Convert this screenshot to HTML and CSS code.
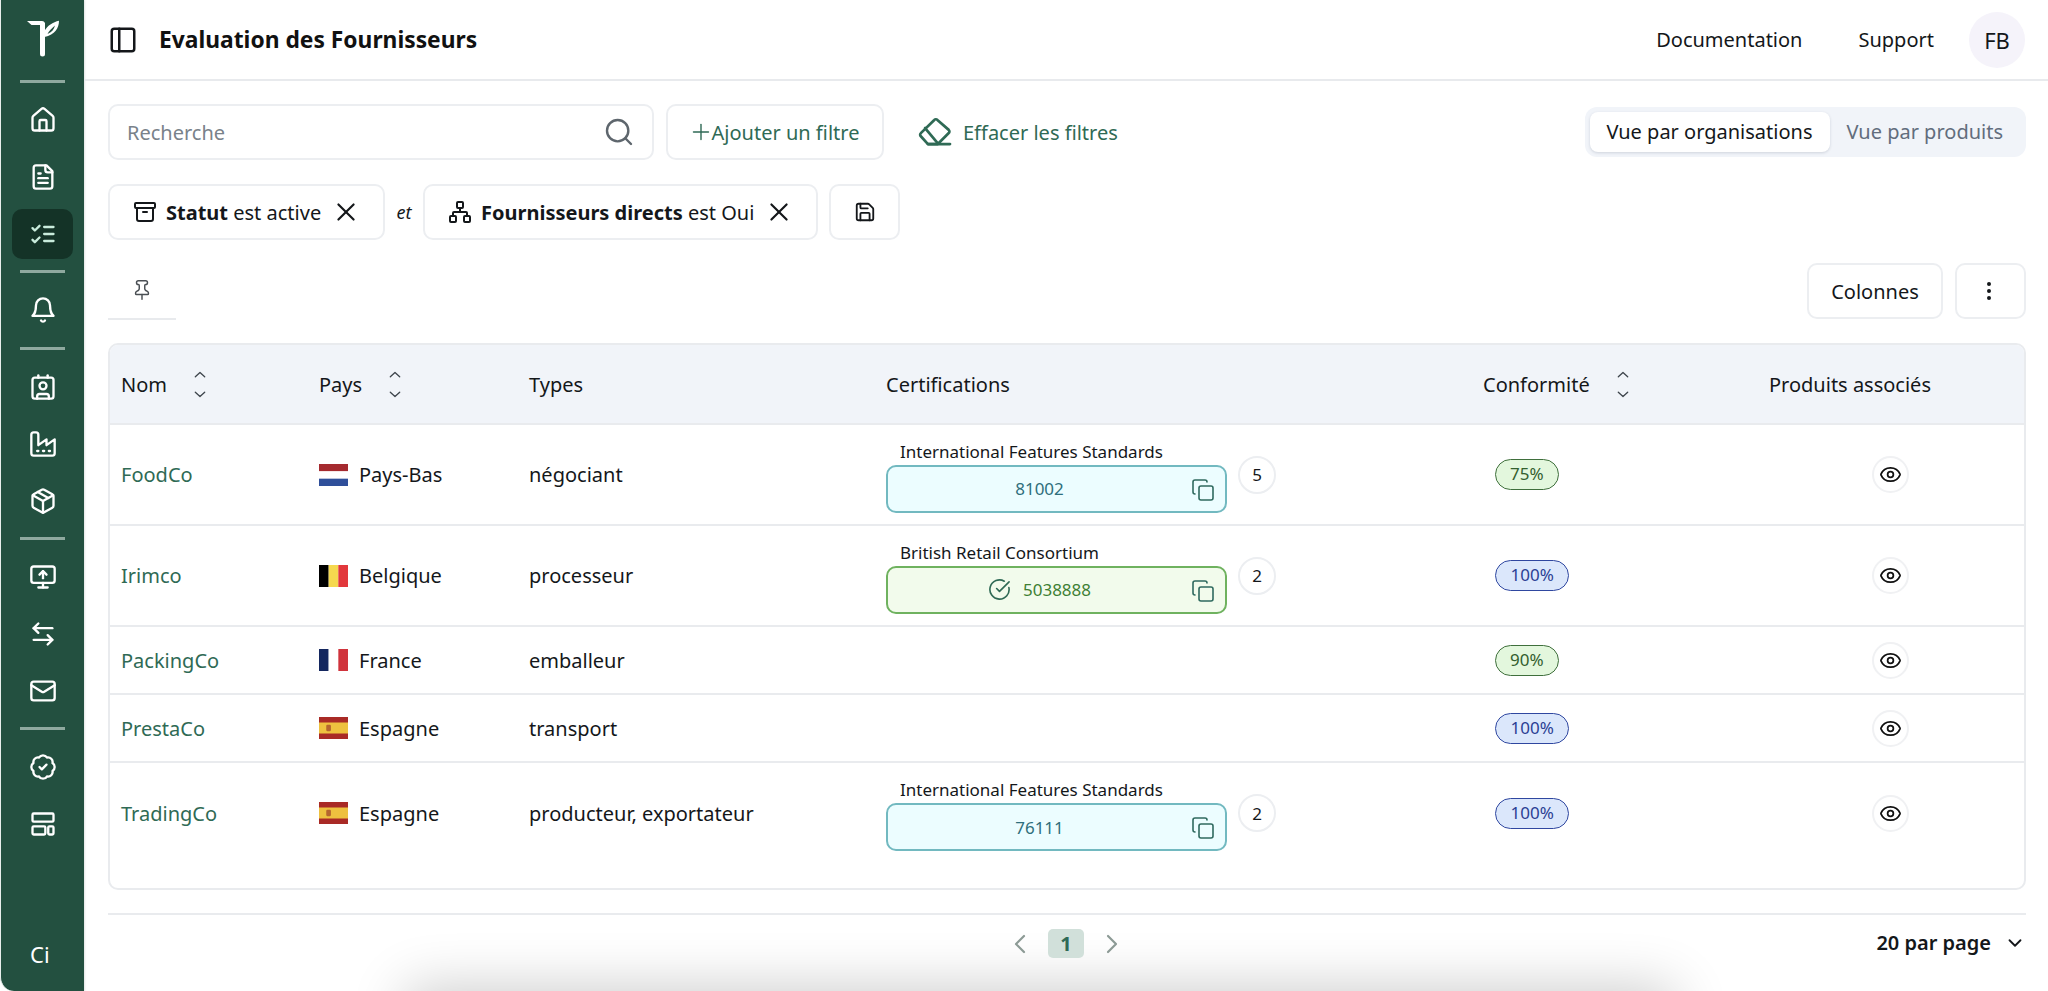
FILE: index.html
```html
<!DOCTYPE html>
<html lang="fr">
<head>
<meta charset="utf-8">
<title>Evaluation des Fournisseurs</title>
<link rel="stylesheet" href="styles.css">
</head>
<body>
<svg class="sprite" aria-hidden="true">
  <symbol id="i-home" viewBox="0 0 24 24"><path d="M3 10a2 2 0 0 1 .709-1.528l7-5.999a2 2 0 0 1 2.582 0l7 5.999A2 2 0 0 1 21 10v9a2 2 0 0 1-2 2H5a2 2 0 0 1-2-2z"/><path d="M15 21v-8a1 1 0 0 0-1-1h-4a1 1 0 0 0-1 1v8"/></symbol>
  <symbol id="i-file" viewBox="0 0 24 24"><path d="M15 2H6a2 2 0 0 0-2 2v16a2 2 0 0 0 2 2h12a2 2 0 0 0 2-2V7Z"/><path d="M14 2v4a2 2 0 0 0 2 2h4"/><path d="M10 9H8"/><path d="M16 13H8"/><path d="M16 17H8"/></symbol>
  <symbol id="i-checks" viewBox="0 0 24 24"><path d="m3 17 2 2 4-4"/><path d="m3 7 2 2 4-4"/><path d="M13 6h8"/><path d="M13 12h8"/><path d="M13 18h8"/></symbol>
  <symbol id="i-bell" viewBox="0 0 24 24"><path d="M6 8a6 6 0 0 1 12 0c0 7 3 9 3 9H3s3-2 3-9"/><path d="M10.3 21a1.94 1.94 0 0 0 3.4 0"/></symbol>
  <symbol id="i-contact" viewBox="0 0 24 24"><path d="M16 2v2"/><path d="M7 22v-2a2 2 0 0 1 2-2h6a2 2 0 0 1 2 2v2"/><path d="M8 2v2"/><circle cx="12" cy="11" r="3"/><rect x="3" y="4" width="18" height="18" rx="2"/></symbol>
  <symbol id="i-factory" viewBox="0 0 24 24"><path d="M2 20a2 2 0 0 0 2 2h16a2 2 0 0 0 2-2V8l-7 5V8l-7 5V4a2 2 0 0 0-2-2H4a2 2 0 0 0-2 2Z"/><path d="M17 18h1"/><path d="M12 18h1"/><path d="M7 18h1"/></symbol>
  <symbol id="i-package" viewBox="0 0 24 24"><path d="M11 21.73a2 2 0 0 0 2 0l7-4A2 2 0 0 0 21 16V8a2 2 0 0 0-1-1.73l-7-4a2 2 0 0 0-2 0l-7 4A2 2 0 0 0 3 8v8a2 2 0 0 0 1 1.73z"/><path d="M12 22V12"/><path d="m3.3 7 8.7 5 8.7-5"/><path d="m7.5 4.27 9 5.15"/></symbol>
  <symbol id="i-monitor" viewBox="0 0 24 24"><path d="m9 10 3-3 3 3"/><path d="M12 13V7"/><rect x="2" y="3" width="20" height="14" rx="2"/><path d="M12 17v4"/><path d="M8 21h8"/></symbol>
  <symbol id="i-arrows" viewBox="0 0 24 24"><path d="M8 3 4 7l4 4"/><path d="M4 7h16"/><path d="m16 21 4-4-4-4"/><path d="M20 17H4"/></symbol>
  <symbol id="i-mail" viewBox="0 0 24 24"><rect x="2" y="4" width="20" height="16" rx="2"/><path d="m22 7-8.97 5.7a1.94 1.94 0 0 1-2.06 0L2 7"/></symbol>
  <symbol id="i-badge" viewBox="0 0 24 24"><path d="M3.85 8.62a4 4 0 0 1 4.78-4.77 4 4 0 0 1 6.74 0 4 4 0 0 1 4.78 4.78 4 4 0 0 1 0 6.74 4 4 0 0 1-4.77 4.78 4 4 0 0 1-6.75 0 4 4 0 0 1-4.78-4.77 4 4 0 0 1 0-6.76Z"/><path d="m9 12 2 2 4-4"/></symbol>
  <symbol id="i-layout" viewBox="0 0 24 24"><rect x="3" y="3" width="18" height="7" rx="1"/><rect x="3" y="14" width="11" height="7" rx="1"/><rect x="16.500" y="14" width="4.500" height="7" rx="1"/></symbol>
  <symbol id="i-panel" viewBox="0 0 24 24"><rect x="3" y="3" width="18" height="18" rx="2"/><path d="M9 3v18"/></symbol>
  <symbol id="i-search" viewBox="0 0 24 24"><circle cx="11" cy="11" r="8"/><path d="m21 21-4.3-4.3"/></symbol>
  <symbol id="i-plus" viewBox="0 0 24 24"><path d="M3 12h18"/><path d="M12 3v18"/></symbol>
  <symbol id="i-eraser" viewBox="0 0 24 24"><path d="M11.500 3.500a1.500 1.500 0 0 1 2.200 0l8 7a1.500 1.500 0 0 1 0 2.200L14 20.500H7L2 15a1.500 1.500 0 0 1 0-2.200Z"/><path d="M5 9.200 14 20"/><path d="M7 20.500h15.600"/></symbol>
  <symbol id="i-archive" viewBox="0 0 24 24"><rect x="2" y="3" width="20" height="5" rx="1"/><path d="M4 8v11a2 2 0 0 0 2 2h12a2 2 0 0 0 2-2V8"/><path d="M10 12h4"/></symbol>
  <symbol id="i-network" viewBox="0 0 24 24"><rect x="16" y="16" width="6" height="6" rx="1"/><rect x="2" y="16" width="6" height="6" rx="1"/><rect x="9" y="2" width="6" height="6" rx="1"/><path d="M5 16v-3a1 1 0 0 1 1-1h12a1 1 0 0 1 1 1v3"/><path d="M12 12V8"/></symbol>
  <symbol id="i-x" viewBox="0 0 24 24"><path d="M19 5 5 19"/><path d="m5 5 14 14"/></symbol>
  <symbol id="i-save" viewBox="0 0 24 24"><path d="M15.2 3a2 2 0 0 1 1.4.6l3.8 3.8a2 2 0 0 1 .6 1.4V19a2 2 0 0 1-2 2H5a2 2 0 0 1-2-2V5a2 2 0 0 1 2-2z"/><path d="M17 21v-7a1 1 0 0 0-1-1H8a1 1 0 0 0-1 1v7"/><path d="M7 3v4a1 1 0 0 0 1 1h7"/></symbol>
  <symbol id="i-pin" viewBox="0 0 24 24"><path d="M12 17v5"/><path d="M9 10.76a2 2 0 0 1-1.11 1.79l-1.78.9A2 2 0 0 0 5 15.24V16a1 1 0 0 0 1 1h12a1 1 0 0 0 1-1v-.76a2 2 0 0 0-1.11-1.79l-1.78-.9A2 2 0 0 1 15 10.76V7a1 1 0 0 1 1-1 2 2 0 0 0 0-4H8a2 2 0 0 0 0 4 1 1 0 0 1 1 1z"/></symbol>
  <symbol id="i-copy" viewBox="0 0 24 24"><rect x="8" y="8" width="14" height="14" rx="2"/><path d="M4 16c-1.1 0-2-.9-2-2V4c0-1.1.9-2 2-2h10c1.1 0 2 .9 2 2"/></symbol>
  <symbol id="i-check" viewBox="0 0 24 24"><path d="M21.801 10A10 10 0 1 1 17 3.335"/><path d="m9 11 3 3L22 4"/></symbol>
  <symbol id="i-eye" viewBox="0 0 24 24"><path d="M2.062 12.348a1 1 0 0 1 0-.696 10.75 10.75 0 0 1 19.876 0 1 1 0 0 1 0 .696 10.75 10.75 0 0 1-19.876 0"/><circle cx="12" cy="12" r="3"/></symbol>
  <symbol id="i-sort" viewBox="0 0 12 26"><path d="m1.500 5.500 4.500-4 4.500 4"/><path d="m1.500 20.500 4.500 4 4.500-4"/></symbol>
  <symbol id="i-left" viewBox="0 0 24 24"><path d="m15 4-8 8 8 8"/></symbol>
  <symbol id="i-right" viewBox="0 0 24 24"><path d="m9 4 8 8-8 8"/></symbol>
  <symbol id="i-down" viewBox="0 0 24 24"><path d="m6 9 6 6 6-6"/></symbol>
  <symbol id="i-dots" viewBox="0 0 24 24"><circle cx="12" cy="5" r="1"/><circle cx="12" cy="12" r="1"/><circle cx="12" cy="19" r="1"/></symbol>
</svg>

<div class="app">
  <aside class="sidebar">
    <div class="logo">
      <svg class="logo-mark" viewBox="0 0 32 37"><path d="M0 1H15a3.500 3.500 0 0 1 3 2V5H4.500Z"/><path d="M13 3.500h5V34a2.500 2.500 0 0 1-5 0Z"/><path fill-rule="evenodd" d="M17.500 11C20 6 26 2 32 .8 32 8 28 15 17.500 17ZM20.500 14C24.500 12.500 27 9.500 28 5.500 24.500 8.500 22 11 20.500 14Z"/></svg>
    </div>
    <div class="rule"></div>
    <nav class="nav-group">
      <a class="nav-item"><svg class="nav-icon"><use href="#i-home"/></svg></a>
      <a class="nav-item"><svg class="nav-icon"><use href="#i-file"/></svg></a>
      <a class="nav-item nav-item-active"><svg class="nav-icon"><use href="#i-checks"/></svg></a>
    </nav>
    <div class="rule"></div>
    <nav class="nav-group nav-group-bell">
      <a class="nav-item"><svg class="nav-icon"><use href="#i-bell"/></svg></a>
    </nav>
    <div class="rule"></div>
    <nav class="nav-group">
      <a class="nav-item"><svg class="nav-icon"><use href="#i-contact"/></svg></a>
      <a class="nav-item"><svg class="nav-icon"><use href="#i-factory"/></svg></a>
      <a class="nav-item"><svg class="nav-icon"><use href="#i-package"/></svg></a>
    </nav>
    <div class="rule"></div>
    <nav class="nav-group">
      <a class="nav-item"><svg class="nav-icon"><use href="#i-monitor"/></svg></a>
      <a class="nav-item"><svg class="nav-icon"><use href="#i-arrows"/></svg></a>
      <a class="nav-item"><svg class="nav-icon"><use href="#i-mail"/></svg></a>
    </nav>
    <div class="rule"></div>
    <nav class="nav-group">
      <a class="nav-item"><svg class="nav-icon"><use href="#i-badge"/></svg></a>
      <a class="nav-item"><svg class="nav-icon"><use href="#i-layout"/></svg></a>
    </nav>
    <div class="tenant">Ci</div>
  </aside>

  <div class="main">
    <header class="topbar">
      <svg class="icon topbar-panel"><use href="#i-panel"/></svg>
      <h1 class="title">Evaluation des Fournisseurs</h1>
      <a class="top-link top-link-doc">Documentation</a>
      <a class="top-link top-link-support">Support</a>
      <div class="avatar">FB</div>
    </header>

    <div class="content">
      <div class="filter-row">
        <label class="search">
          <input class="search-input" type="text" placeholder="Recherche">
          <svg class="icon search-icon"><use href="#i-search"/></svg>
        </label>
        <button class="box-btn add-filter"><svg class="icon plus-icon"><use href="#i-plus"/></svg>Ajouter un filtre</button>
        <a class="clear-filters"><svg class="icon eraser-icon"><use href="#i-eraser"/></svg>Effacer les filtres</a>
        <div class="toggle">
          <span class="toggle-opt toggle-opt-on">Vue par organisations</span>
          <span class="toggle-opt">Vue par produits</span>
        </div>
      </div>

      <div class="chip-row">
        <div class="chip chip-status">
          <svg class="icon chip-icon"><use href="#i-archive"/></svg>
          <span class="chip-text"><b>Statut</b> est active</span>
          <svg class="icon chip-x"><use href="#i-x"/></svg>
        </div>
        <i class="chip-and">et</i>
        <div class="chip chip-direct">
          <svg class="icon chip-icon"><use href="#i-network"/></svg>
          <span class="chip-text"><b>Fournisseurs directs</b> est Oui</span>
          <svg class="icon chip-x"><use href="#i-x"/></svg>
        </div>
        <button class="box-btn save-btn"><svg class="icon save-icon"><use href="#i-save"/></svg></button>
      </div>

      <div class="tool-row">
        <div class="pin-tab"><svg class="icon pin-icon"><use href="#i-pin"/></svg></div>
        <button class="box-btn col-btn">Colonnes</button>
        <button class="box-btn dots-btn"><svg class="icon dots-icon"><use href="#i-dots"/></svg></button>
      </div>

      <div class="table-wrap">
        <table class="grid">
          <colgroup>
            <col class="col-nom"><col class="col-pays"><col class="col-types"><col class="col-cert"><col class="col-conf"><col>
          </colgroup>
          <thead>
            <tr>
              <th><span class="th-sort">Nom<svg class="sort-icon"><use href="#i-sort"/></svg></span></th>
              <th><span class="th-sort">Pays<svg class="sort-icon"><use href="#i-sort"/></svg></span></th>
              <th>Types</th>
              <th>Certifications</th>
              <th><span class="th-sort">Conformité<svg class="sort-icon"><use href="#i-sort"/></svg></span></th>
              <th>Produits associés</th>
            </tr>
          </thead>
          <tbody>
            <tr class="row-tall">
              <td class="org">FoodCo</td>
              <td><span class="country"><svg class="flag" viewBox="0 0 3 3" preserveAspectRatio="none"><rect width="3" height="1" fill="#a52a2f"/><rect y="1" width="3" height="1" fill="#fff"/><rect y="2" width="3" height="1" fill="#2f4f9a"/></svg>Pays-Bas</span></td>
              <td>négociant</td>
              <td>
                <div class="cert">
                  <div class="cert-main">
                    <div class="cert-label">International Features Standards</div>
                    <div class="cert-box cert-box-info"><span class="cert-num">81002</span><svg class="icon copy-icon"><use href="#i-copy"/></svg></div>
                  </div>
                  <span class="count">5</span>
                </div>
              </td>
              <td><span class="pill pill-green">75%</span></td>
              <td class="cell-eye"><span class="eye-btn"><svg class="icon eye-icon"><use href="#i-eye"/></svg></span></td>
            </tr>
            <tr class="row-tall">
              <td class="org">Irimco</td>
              <td><span class="country"><svg class="flag" viewBox="0 0 3 3" preserveAspectRatio="none"><rect width="1" height="3" fill="#000"/><rect x="1" width="1" height="3" fill="#f5d84f"/><rect x="2" width="1" height="3" fill="#e2383c"/></svg>Belgique</span></td>
              <td>processeur</td>
              <td>
                <div class="cert">
                  <div class="cert-main">
                    <div class="cert-label">British Retail Consortium</div>
                    <div class="cert-box cert-box-ok"><span class="cert-num"><svg class="icon check-icon"><use href="#i-check"/></svg>5038888</span><svg class="icon copy-icon"><use href="#i-copy"/></svg></div>
                  </div>
                  <span class="count">2</span>
                </div>
              </td>
              <td><span class="pill pill-blue">100%</span></td>
              <td class="cell-eye"><span class="eye-btn"><svg class="icon eye-icon"><use href="#i-eye"/></svg></span></td>
            </tr>
            <tr class="row-short">
              <td class="org">PackingCo</td>
              <td><span class="country"><svg class="flag" viewBox="0 0 3 3" preserveAspectRatio="none"><rect width="1" height="3" fill="#14275f"/><rect x="1" width="1" height="3" fill="#fff"/><rect x="2" width="1" height="3" fill="#d0333c"/></svg>France</span></td>
              <td>emballeur</td>
              <td></td>
              <td><span class="pill pill-green">90%</span></td>
              <td class="cell-eye"><span class="eye-btn"><svg class="icon eye-icon"><use href="#i-eye"/></svg></span></td>
            </tr>
            <tr class="row-short">
              <td class="org">PrestaCo</td>
              <td><span class="country"><svg class="flag" viewBox="0 0 28 21" preserveAspectRatio="none"><rect width="28" height="21" fill="#a92a26"/><rect y="5.250" width="28" height="10.500" fill="#eec13f"/><rect x="7" y="7.500" width="4.500" height="6" rx="1" fill="#b5652f"/></svg>Espagne</span></td>
              <td>transport</td>
              <td></td>
              <td><span class="pill pill-blue">100%</span></td>
              <td class="cell-eye"><span class="eye-btn"><svg class="icon eye-icon"><use href="#i-eye"/></svg></span></td>
            </tr>
            <tr class="row-last">
              <td class="org">TradingCo</td>
              <td><span class="country"><svg class="flag" viewBox="0 0 28 21" preserveAspectRatio="none"><rect width="28" height="21" fill="#a92a26"/><rect y="5.250" width="28" height="10.500" fill="#eec13f"/><rect x="7" y="7.500" width="4.500" height="6" rx="1" fill="#b5652f"/></svg>Espagne</span></td>
              <td>producteur, exportateur</td>
              <td>
                <div class="cert">
                  <div class="cert-main">
                    <div class="cert-label">International Features Standards</div>
                    <div class="cert-box cert-box-info"><span class="cert-num">76111</span><svg class="icon copy-icon"><use href="#i-copy"/></svg></div>
                  </div>
                  <span class="count">2</span>
                </div>
              </td>
              <td><span class="pill pill-blue">100%</span></td>
              <td class="cell-eye"><span class="eye-btn"><svg class="icon eye-icon"><use href="#i-eye"/></svg></span></td>
            </tr>
          </tbody>
        </table>
      </div>

      <footer class="pager">
        <div class="pager-nav">
          <svg class="icon pager-arrow"><use href="#i-left"/></svg>
          <span class="pager-page">1</span>
          <svg class="icon pager-arrow"><use href="#i-right"/></svg>
        </div>
        <div class="per-page">20 par page<svg class="icon per-page-icon"><use href="#i-down"/></svg></div>
      </footer>
    </div>
  </div>
  <div class="window-shadow"></div>
</div>
</body>
</html>
```

FILE: styles.css
```css
* { box-sizing: border-box; }
html, body { margin: 0; height: 100%; }
body {
  font-family: "Noto Sans", "Open Sans", sans-serif;
  font-size: 20px;
  color: #14171a;
  background: #fff;
  overflow: hidden;
}
.sprite { position: absolute; width: 0; height: 0; overflow: hidden; }
svg { display: block; flex: none; }
symbol { overflow: visible; }

.icon {
  fill: none;
  stroke: currentColor;
  stroke-width: 2;
  stroke-linecap: round;
  stroke-linejoin: round;
  width: 24px;
  height: 24px;
}

.app { position: relative; display: flex; height: 100vh; overflow: hidden; }

/* Sidebar */
.sidebar {
  width: 84px;
  flex: none;
  background: #235040;
  color: #fff;
  display: flex;
  flex-direction: column;
  border-left: 1px solid #e8efec;
  border-bottom-left-radius: 14px;
  box-shadow: 1px 0 2px rgba(0, 40, 30, .12);
}
.logo { height: 80px; display: flex; align-items: center; justify-content: center; }
.logo-mark { width: 32px; height: 37px; fill: #fff; margin-bottom: 3px; margin-left: 1px; }
.rule { height: 3px; margin: 0 19px 0 19px; background: #8fa99f; }
.nav-group { padding: 8px 0; display: flex; flex-direction: column; align-items: center; }
.nav-group-bell { padding-bottom: 9px; }
.nav-item {
  width: 61px;
  height: 57px;
  display: flex;
  align-items: center;
  justify-content: center;
  position: relative;
  z-index: 0;
}
.nav-item-active { color: #c9ecdc; }
.nav-item-active::before {
  content: "";
  position: absolute;
  inset: 3.500px 0;
  background: #143327;
  border-radius: 10px;
  z-index: -1;
}
.nav-icon {
  width: 28px;
  height: 28px;
  fill: none;
  stroke: currentColor;
  stroke-width: 2;
  stroke-linecap: round;
  stroke-linejoin: round;
}
.tenant { margin-top: auto; margin-bottom: 22px; padding-left: 29px; font-size: 22px; line-height: 30px; }

/* Main */
.main { flex: 1; min-width: 0; display: flex; flex-direction: column; }
.topbar {
  height: 81px;
  flex: none;
  display: flex;
  align-items: center;
  padding: 0 23px 0 24px;
  border-bottom: 2px solid #e8eaed;
}
.topbar-panel { width: 30px; height: 30px; stroke: #14171a; }
.title { margin: 0 auto 0 21px; font-size: 22.800px; font-weight: 700; color: #111; }
.top-link { margin-right: 56px; }
.top-link-support { margin-right: 35px; }
.avatar {
  width: 56px;
  height: 56px;
  border-radius: 50%;
  background: #f5f3fa;
  display: flex;
  align-items: center;
  justify-content: center;
  font-size: 22px;
}

.content { padding: 0 22px 0 24px; flex: 1; display: flex; flex-direction: column; }

.box-btn {
  font: inherit;
  color: inherit;
  background: #fff;
  border: 2px solid #eceef1;
  border-radius: 10px;
  display: flex;
  align-items: center;
  justify-content: center;
  padding: 0;
  height: 56px;
}

.filter-row { display: flex; align-items: center; margin-top: 23px; height: 56px; }
.search {
  width: 546px;
  height: 56px;
  display: flex;
  align-items: center;
  border: 2px solid #eceef1;
  border-radius: 10px;
  padding: 0 17px;
}
.search-input {
  flex: 1;
  min-width: 0;
  border: 0;
  outline: 0;
  padding: 0;
  font: inherit;
  background: transparent;
}
.search-input::placeholder { color: #79828a; opacity: 1; }
.search-icon { width: 32px; height: 32px; color: #5e666d; stroke-width: 1.800; }
.add-filter { width: 218px; margin-left: 12px; color: #2f6a55; }
.plus-icon { width: 20px; height: 20px; margin-right: 1px; stroke-width: 1.700; }
.clear-filters { display: flex; align-items: center; color: #2f6a55; margin-left: 34px; }
.eraser-icon { width: 34px; height: 34px; margin-right: 11px; stroke-width: 1.900; }
.toggle {
  margin-left: auto;
  height: 50px;
  padding: 5px 6px 5px 5px;
  background: #f1f4f9;
  border-radius: 12px;
  display: flex;
}
.toggle-opt { padding: 0 17px; line-height: 40px; color: #626d7d; border-radius: 8px; }
.toggle-opt-on { padding-left: 16px; background: #fff; color: #14171a; box-shadow: 0 1px 3px rgba(15, 30, 60, .15); }

.chip-row { display: flex; align-items: center; margin-top: 24px; height: 56px; }
.chip {
  height: 56px;
  display: flex;
  align-items: center;
  background: #fff;
  border: 2px solid #eceef1;
  border-radius: 10px;
  padding-left: 23px;
}
.chip-status { width: 277px; }
.chip-direct { width: 395px; }
.chip-icon { width: 24px; height: 24px; margin-right: 9px; }
.chip-text { white-space: nowrap; }
.chip-text b { font-weight: 700; }
.chip-x { width: 26px; height: 26px; margin-left: 12px; stroke-width: 2; }
.chip-and { width: 38px; text-align: center; font-size: 18px; }
.save-btn { width: 71px; margin-left: 11px; }
.save-icon { width: 22px; height: 22px; }

.tool-row { display: flex; align-items: flex-start; margin-top: 23px; height: 56px; }
.pin-tab {
  width: 68px;
  height: 57px;
  border-bottom: 2px solid #e8eaed;
  display: flex;
  justify-content: center;
  padding-top: 16px;
}
.pin-icon { color: #4a4f54; width: 22px; height: 22px; stroke-width: 1.600; }
.col-btn { width: 136px; margin-left: auto; }
.dots-btn { width: 71px; margin-left: 12px; }
.dots-icon { width: 24px; height: 24px; fill: currentColor; transform: translateX(-2px); }

/* Table */
.table-wrap {
  margin-top: 24px;
  height: 547px;
  border: 2px solid #e9ebee;
  border-radius: 10px;
  overflow: hidden;
}
.grid { width: 100%; border-collapse: separate; border-spacing: 0; table-layout: fixed; }
.col-nom { width: 198px; }
.col-pays { width: 210px; }
.col-types { width: 357px; }
.col-cert { width: 597px; }
.col-conf { width: 286px; }
.grid th {
  height: 80px;
  background: #f1f4f9;
  font-weight: 400;
  text-align: left;
  padding: 0 0 0 11px;
  border-bottom: 2px solid #e9ebee;
}
.th-sort { display: flex; align-items: center; gap: 26px; }
.sort-icon { width: 14px; height: 27px; fill: none; stroke: #3f464d; stroke-width: 1.300; stroke-linecap: round; stroke-linejoin: round; }
.grid td { padding: 0 0 0 11px; border-bottom: 2px solid #e9ebee; }
.grid td.cell-eye { padding: 0 2px 0 0; }
.grid .row-last td.cell-eye { padding: 0 2px 27px 0; }
.row-tall td { height: 101px; }
.row-short td { height: 68px; }
.row-last td { height: 127px; }
.grid .row-last td { border-bottom: 0; padding-bottom: 27px; }
.org { color: #2f6a55; }
.country { display: flex; align-items: center; gap: 11px; }
.flag { width: 29px; height: 22px; }

.cert { display: flex; align-items: center; gap: 11px; }
.cert-main { width: 341px; padding-top: 2px; }
.cert-label { font-size: 17px; line-height: 26px; padding-left: 14px; white-space: nowrap; }
.cert-box {
  height: 48px;
  border-radius: 10px;
  border: 2px solid;
  display: flex;
  align-items: center;
  padding-right: 10px;
  font-size: 17px;
}
.cert-box-info { background: #ecfdff; border-color: #72b9c0; color: #2f6f7c; }
.cert-box-ok { background: #f2fbec; border-color: #6fb25f; color: #3e7f34; }
.cert-num { flex: 1; display: flex; align-items: center; justify-content: center; gap: 12px; }
.check-icon { width: 23px; height: 23px; color: #2f6a55; stroke-width: 1.700; }
.copy-icon { width: 24px; height: 24px; color: #2f6a5f; stroke-width: 1.600; margin-top: 2px; }
.count {
  width: 38px;
  height: 38px;
  border-radius: 50%;
  border: 2px solid #eceef1;
  display: flex;
  align-items: center;
  justify-content: center;
  font-size: 17px;
}
.pill {
  display: inline-block;
  height: 31px;
  line-height: 27px;
  padding: 0 14px;
  border: 1.500px solid;
  border-radius: 16px;
  font-size: 17px;
  margin-left: 12px;
  vertical-align: middle;
}
.pill-green { background: #e3f7dd; border-color: #3f6f3c; color: #33602f; }
.pill-blue { padding: 0 14.500px; background: #dbe7fb; border-color: #2f47a0; color: #2b3f94; }
.cell-eye { text-align: center; }
.eye-btn {
  width: 37px;
  height: 37px;
  border-radius: 50%;
  border: 2px solid #f0f1f3;
  display: inline-flex;
  align-items: center;
  justify-content: center;
  vertical-align: middle;
}
.eye-icon { width: 23px; height: 23px; color: #111; stroke-width: 1.800; }

/* Pager */
.pager {
  margin-top: 23px;
  border-top: 2px solid #e9ebee;
  display: grid;
  grid-template-columns: 1fr auto 1fr;
  align-items: center;
  height: 59px;
  position: relative;
  z-index: 1;
}
.pager-nav { grid-column: 2; display: flex; align-items: center; gap: 15px; margin-left: -2px; }
.pager-arrow { width: 24px; height: 24px; color: #8c9a95; stroke-width: 2.200; }
.pager-page {
  width: 36px;
  height: 29px;
  background: #d1e0da;
  border-radius: 5px;
  color: #2f6a55;
  font-weight: 700;
  text-align: center;
  line-height: 29px;
}
.per-page { grid-column: 3; justify-self: end; display: flex; align-items: center; font-weight: 600; gap: 13px; margin-bottom: 2px; }
.per-page-icon { width: 22px; height: 22px; }

.window-shadow {
  position: absolute;
  left: 420px;
  width: 1240px;
  bottom: -60px;
  height: 50px;
  box-shadow: 0 0 55px 14px rgba(0, 0, 0, .2);
}
```
